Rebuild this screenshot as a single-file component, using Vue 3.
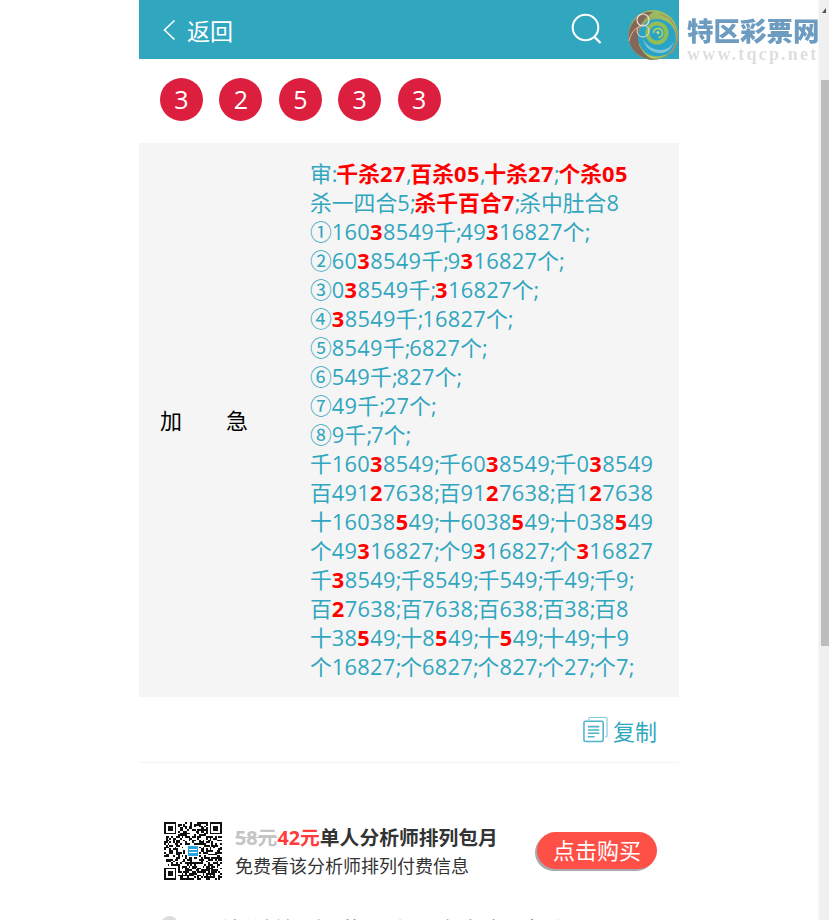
<template>
  <div class="page">
    <div class="wrap">
      <header class="top">
        <a class="back">
          <svg width="14" height="22" viewBox="0 0 14 22"><path d="M12.5 1.5 2.5 11l10 9.5" fill="none" stroke="#fff" stroke-width="1.6"/></svg>
          <span>返回</span>
        </a>
        <svg class="search" width="32" height="32" viewBox="0 0 32 32">
          <circle cx="14.5" cy="14.5" r="12.8" fill="none" stroke="#fff" stroke-width="2"/>
          <path d="M23.5 24 29.5 30" fill="none" stroke="#fff" stroke-width="2.4"/>
        </svg>
      </header>

      <div class="balls">
        <span class="ball" v-for="(n, i) in balls" :key="i">{{ n }}</span>
      </div>

      <div class="plan">
        <div class="plan-name"><span>加</span><span>急</span></div>
        <div class="plan-text">
          <div v-for="(line, i) in lines" :key="i">
            <span v-for="(seg, j) in parse(line)" :key="j" :class="seg.cls">{{ seg.text }}</span>
          </div>
        </div>
      </div>

      <div class="copy-row">
        <svg width="25" height="27" viewBox="0 0 26 27" fill="none" stroke="#4fb3c9">
          <path d="M6 3.5V2.5Q6 1 7.5 1H24Q25 1 25 2V20Q25 21 24 21H23" stroke-width="1.2" opacity=".7"/>
          <rect x="1" y="5" width="20" height="21" rx="1.5" stroke-width="1.6"/>
          <path d="M5 10.5H17M5 14H17M5 17.5H17M5 21H12" stroke-width="1.6"/>
        </svg>
        <span>复制</span>
      </div>

      <div class="buy">
        <svg class="qr" width="58" height="58" :viewBox="`0 0 ${qrSize} ${qrSize}`" shape-rendering="crispEdges">
          <rect v-for="(c, i) in qrCells" :key="i" :x="c[0]" :y="c[1]" width="1" height="1" fill="#111"/>
          <rect x="13" y="13" width="7" height="7" fill="#fff"/>
          <rect x="13.5" y="13.5" width="6" height="6" rx=".8" fill="#29a3e0"/>
          <path d="M14.5 15.5h4M14.5 17.5h4" stroke="#fff" stroke-width=".6"/>
        </svg>
        <div class="buy-info">
          <div class="buy-title"><s>58元</s><em>42元</em>单人分析师排列包月</div>
          <div class="buy-sub">免费看该分析师排列付费信息</div>
        </div>
        <button class="buy-btn">点击购买</button>
      </div>

      <div class="next-row">
        <i class="dot"></i>
        <span>该分析师近期的预测记录都在这里查看</span>
      </div>
    </div>

    <!-- 站点水印 -->
    <div class="mark">
      <svg class="mark-logo" width="52" height="52" viewBox="0 0 52 52">
        <defs>
          <linearGradient id="lg" x1="0" y1="1" x2="1" y2="0">
            <stop offset="0" stop-color="#8a6f62"/>
            <stop offset=".5" stop-color="#93a868"/>
            <stop offset="1" stop-color="#a6cf52"/>
          </linearGradient>
        </defs>
        <circle cx="26" cy="26" r="25" fill="url(#lg)"/>
        <circle cx="30" cy="29" r="19" fill="#2ba3c6"/>
        <path d="M12 34C16 47 30 51 42 44 32 52 20 51 12 44Z" fill="#a8c45c"/>
        <path d="M20 3C8 7 1 18 2 30c1 10 10 19 24 21-10-6-16-14-15-24 0-9 5-17 15-24Z" fill="#84675b"/>
        <path d="M16 30c2 9 10 15 19 14 6-1 10-5 12-11-3 5-8 8-14 8-7 0-13-4-17-11Z" fill="#7fc6d8"/>
        <circle cx="30" cy="24" r="11.5" fill="#93bd55"/>
        <circle cx="30" cy="24" r="7.5" fill="#2ba3c6"/>
        <path d="M26.5 24a4.5 4.5 0 1 1 5 4.4" fill="none" stroke="#a6cc63" stroke-width="2"/>
        <circle cx="31" cy="23.5" r="1.5" fill="#c5dd7a"/>
        <path d="M33 5A24 24 0 0 1 44 44" fill="none" stroke="#b08a70" stroke-width="1.2"/>
        <circle cx="16" cy="11" r="6" fill="none" stroke="#f0ddd0" stroke-width="1.2"/>
        <circle cx="16" cy="22" r="6" fill="none" stroke="#f0ddd0" stroke-width="1"/>
        <path d="M2 32c2-8 5-12 10-14" fill="none" stroke="#e8b8a0" stroke-width="1"/>
      </svg>
      <div class="mark-text">
        <div class="mark-cn">特区彩票网</div>
        <div class="mark-en">www.tqcp.net</div>
      </div>
    </div>

    <!-- 滚动条 -->
    <div class="sbar">
      <i class="sbar-up"></i>
      <i class="sbar-thumb"></i>
    </div>
  </div>
</template>

<script setup>
const balls = [3, 2, 5, 3, 3]

// [] 里的是红色加粗
const lines = [
  '审:[千杀27],[百杀05],[十杀27];[个杀05]',
  '杀一四合5;[杀千百合7];杀中肚合8',
  '①160[3]8549千;49[3]16827个;',
  '②60[3]8549千;9[3]16827个;',
  '③0[3]8549千;[3]16827个;',
  '④[3]8549千;16827个;',
  '⑤8549千;6827个;',
  '⑥549千;827个;',
  '⑦49千;27个;',
  '⑧9千;7个;',
  '千160[3]8549;千60[3]8549;千0[3]8549',
  '百491[2]7638;百91[2]7638;百1[2]7638',
  '十16038[5]49;十6038[5]49;十038[5]49',
  '个49[3]16827;个9[3]16827;个[3]16827',
  '千[3]8549;千8549;千549;千49;千9;',
  '百[2]7638;百7638;百638;百38;百8',
  '十38[5]49;十8[5]49;十[5]49;十49;十9',
  '个16827;个6827;个827;个27;个7;'
]

// 数字和标点单独调字距
const tokens = (text, hot) =>
  text.split(/(\d+|[;,:])/).filter(Boolean).map(s => ({
    text: s,
    cls: {
      hot,
      num: /^\d/.test(s),
      sep: /^[;,:]/.test(s)
    }
  }))

const parse = (line) =>
  line.split(/(\[[^\]]+\])/).filter(Boolean).flatMap(s =>
    s[0] === '[' ? tokens(s.slice(1, -1), true) : tokens(s, false)
  )

const qrSize = 33

const buildQr = () => {
  const cells = []
  let seed = 73
  const rnd = () => {
    seed = (seed * 1103515245 + 12345) & 0x7fffffff
    return (seed >> 16) & 1
  }
  const inFinder = (x, y) => (x < 8 && y < 8) || (x >= qrSize - 8 && y < 8) || (x < 8 && y >= qrSize - 8)
  for (let y = 0; y < qrSize; y++) {
    for (let x = 0; x < qrSize; x++) {
      if (!inFinder(x, y) && rnd()) cells.push([x, y])
    }
  }
  const finder = (ox, oy) => {
    for (let y = 0; y < 7; y++) {
      for (let x = 0; x < 7; x++) {
        const ring = x === 0 || y === 0 || x === 6 || y === 6
        const core = x >= 2 && x <= 4 && y >= 2 && y <= 4
        if (ring || core) cells.push([ox + x, oy + y])
      }
    }
  }
  finder(0, 0)
  finder(qrSize - 7, 0)
  finder(0, qrSize - 7)
  return cells
}

const qrCells = buildQr()
</script>

<style>
html, body {
  margin: 0;
  height: 920px;
  overflow: hidden;
  background: #fff;
}
</style>

<style scoped>
.page {
  width: 819px;
  font-family: "Open Sans", "Noto Sans CJK SC", sans-serif;
}
.wrap {
  width: 540px;
  margin-left: 139px;
}
.top {
  height: 59px;
  background: #31a6bf;
  display: flex;
  align-items: center;
  padding: 0 76px 0 23px;
  box-sizing: border-box;
  justify-content: space-between;
  color: #fff;
}
.back {
  display: flex;
  align-items: center;
  gap: 11px;
  font-size: 23px;
}
.search {
  margin-top: -1px;
}
.balls {
  display: flex;
  gap: 16.4px;
  padding: 19px 21px 22px;
}
.ball {
  width: 43px;
  height: 43px;
  border-radius: 50%;
  background: #dc1f3e;
  color: #fff;
  font-size: 25px;
  line-height: 43px;
  text-align: center;
}
.plan {
  display: flex;
  align-items: center;
  background: #f5f5f5;
  padding: 16px 0;
}
.plan-name {
  width: 88px;
  margin-left: 21px;
  margin-right: 62px;
  padding-bottom: 2px;
  display: flex;
  justify-content: space-between;
  font-size: 22px;
  color: #000;
}
.plan-text {
  font-size: 21.8px;
  line-height: 29px;
  color: #31a6bf;
  white-space: nowrap;
}
.hot {
  color: #f00;
  font-weight: 700;
}
.num {
  letter-spacing: .3px;
}
.hot.num {
  letter-spacing: .5px;
}
.sep {
  letter-spacing: -1.2px;
}
.copy-row {
  height: 65px;
  border-bottom: 1px solid #f5f5f5;
  display: flex;
  align-items: center;
  justify-content: flex-end;
  gap: 5px;
  padding-right: 22px;
  font-size: 22px;
  color: #31a6bf;
}
.buy {
  display: flex;
  align-items: center;
  height: 58px;
  margin-top: 59px;
  padding-left: 25px;
}
.qr {
  flex: none;
}
.buy-info {
  margin-left: 13px;
  padding-top: 2px;
  flex: 1;
  color: #333;
}
.buy-title {
  font-size: 19.8px;
  font-weight: 700;
  line-height: 29px;
}
.buy-title s {
  color: #c4c4c4;
}
.buy-title em {
  color: #ff3b3b;
  font-style: normal;
}
.buy-sub {
  font-size: 18px;
  line-height: 29px;
}
.buy-btn {
  width: 120px;
  height: 37px;
  margin-right: 22px;
  margin-bottom: 2px;
  padding: 0;
  border: 0;
  border-radius: 19px;
  background: #ff5048;
  box-shadow: -2px 2px 0 #aaa;
  color: #fff;
  font-family: inherit;
  font-size: 22px;
  line-height: 37px;
}
.next-row {
  display: flex;
  align-items: flex-start;
  gap: 44px;
  margin-top: 36px;
  padding-left: 22px;
  font-size: 20px;
  line-height: 20px;
  color: #555;
}
.next-row span {
  margin-top: 4px;
}
.dot {
  flex: none;
  width: 17px;
  height: 17px;
  border-radius: 50%;
  background: #ddd;
}
.mark {
  position: fixed;
  top: 8px;
  left: 627px;
  display: flex;
  gap: 8px;
}
.mark-logo {
  margin-top: 1px;
}
.mark-cn {
  font-size: 26.5px;
  line-height: 32px;
  margin-top: 7px;
  font-weight: 900;
  color: #6d9cc0;
  white-space: nowrap;
}
.mark-en {
  font-family: "Liberation Serif", serif;
  font-size: 18px;
  font-weight: 700;
  letter-spacing: 2.2px;
  line-height: 20px;
  margin-top: -3px;
  color: #dedede;
  white-space: nowrap;
}
.sbar {
  position: fixed;
  top: 0;
  right: 0;
  width: 10px;
  height: 920px;
  background: #f0f0f0;
  border-left: 1px solid #f7f7f7;
}
.sbar-up {
  position: absolute;
  top: 8px;
  left: 3px;
  width: 0;
  height: 0;
  border-left: 4px solid transparent;
  border-right: 0 solid transparent;
  border-bottom: 5px solid #505050;
}
.sbar-thumb {
  position: absolute;
  top: 80px;
  left: 2px;
  right: 0;
  height: 566px;
  background: #bdbdbd;
}
</style>
